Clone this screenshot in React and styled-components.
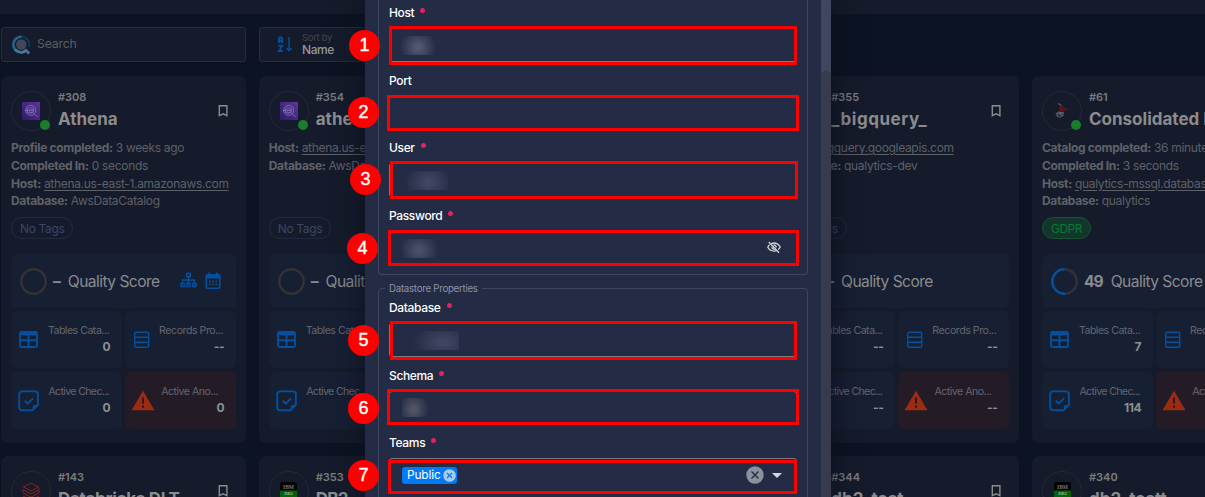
import React from "react";
import styled, { createGlobalStyle } from "styled-components";

const Global = createGlobalStyle`
  * { box-sizing: border-box; }
  html, body { margin: 0; height: 100%; overflow: hidden; background: #0c1322; }
  body { font-family: Inter, "Liberation Sans", sans-serif; }
`;

const Page = styled.main`
  position: relative;
  width: 1205px;
  height: 497px;
  overflow: hidden;
  background: #0c1322;
`;
const TopBar = styled.header`
  height: 14px;
  background: #151b2a;
`;
const Toolbar = styled.div`
  display: flex;
  gap: 13px;
  padding: 13px 0 0 1px;
`;
const ControlBox = styled.div`
  display: flex;
  align-items: center;
  width: 245px;
  height: 35px;
  padding: 0 10px 0 ${(p) => p.$pad}px;
  gap: ${(p) => p.$gap}px;
  background: #151b2a;
  border: 1px solid #262d3b;
  border-radius: 3px;
  color: #5c5e64;
  font-size: 12.3px;
  letter-spacing: -0.2px;
  line-height: 1;
`;
const SortText = styled.div`
  font-size: 9.4px;
  line-height: 11px;
  letter-spacing: -0.25px;
  color: #43464e;
  strong {
    display: block;
    font-weight: 500;
    font-size: 12px;
    line-height: 14px;
    letter-spacing: -0.4px;
    color: #96979a;
  }
`;
const Grid = styled.div`
  display: grid;
  grid-template-columns: repeat(5, 245px);
  grid-auto-rows: 367px;
  gap: 13px 12.75px;
  padding: 14px 0 0 1px;
`;
const Card = styled.article`
  background: #151b2a;
  border-radius: 7px;
  padding: 15px 10px 0;
  overflow: hidden;
`;
const CardHead = styled.div`
  display: flex;
  height: 40px;
  margin-bottom: 8px;
`;
const Avatar = styled.div`
  position: relative;
  display: flex;
  align-items: center;
  justify-content: center;
  flex: none;
  width: 40px;
  height: 40px;
  border: 1px solid #232936;
  border-radius: 50%;
`;
const StatusDot = styled.i`
  position: absolute;
  right: 0;
  bottom: 0;
  width: 10px;
  height: 10px;
  border-radius: 50%;
  background: #1a7d2b;
`;
const Titles = styled.div`
  flex: 1;
  min-width: 0;
  padding-left: 7px;
  white-space: nowrap;
`;
const CardId = styled.div`
  margin-top: -1px;
  font-size: 11px;
  line-height: 15px;
  font-weight: 600;
  color: #7b7c80;
`;
const CardName = styled.div`
  margin-top: 3px;
  font-size: 17px;
  line-height: 22px;
  font-weight: 700;
  letter-spacing: ${(p) => p.$ls || 0}px;
  color: #8c8c8e;
`;
const HeadAction = styled.div`
  width: 10px;
  margin: 14px 8px 0 0;
  line-height: 0;
`;
const Info = styled.div`
  height: 71px;
  font-size: 12px;
  line-height: 17.75px;
  letter-spacing: -0.32px;
  white-space: nowrap;
  color: #5d6068;
  b { font-weight: 700; color: #606269; }
  u { text-underline-offset: 2px; }
`;
const Tag = styled.span`
  display: inline-flex;
  align-items: center;
  height: 22px;
  margin-top: 7px;
  padding: 0 8px;
  border: 1px solid ${(p) => (p.$green ? "#135530" : "#232a3d")};
  border-radius: 11px;
  background: ${(p) => (p.$green ? "#12352c" : "transparent")};
  color: ${(p) => (p.$green ? "#087a34" : "#3c4565")};
  font-size: 12px;
  letter-spacing: ${(p) => (p.$green ? -0.5 : -0.35)}px;
  vertical-align: top;
`;
const Quality = styled.div`
  display: flex;
  align-items: center;
  height: 54px;
  margin-top: 15px;
  padding: 0 15px 0 9px;
  border-radius: 6px;
  background: #171f33;
  color: #8a8b8e;
  font-size: 15.6px;
  letter-spacing: -0.55px;
  white-space: nowrap;
  b { margin: 0 8px 0 6px; font-weight: 700; letter-spacing: -1px; }
`;
const QualityIcons = styled.span`
  display: flex;
  gap: 8px;
  margin-left: auto;
`;
const Tiles = styled.div`
  display: grid;
  grid-template-columns: 111px 111px;
  grid-auto-rows: 57px;
  gap: 4px 3px;
  margin-top: 3px;
`;
const Tile = styled.div`
  display: flex;
  align-items: center;
  justify-content: space-between;
  padding: 0 12px 0 ${(p) => (p.$alert ? 6 : 7)}px;
  border-radius: 6px;
  background: ${(p) => (p.$alert ? "#231c26" : "#171f33")};
`;
const TileText = styled.div`
  margin-top: -2px;
  font-size: 10.6px;
  line-height: 16px;
  letter-spacing: -0.5px;
  text-align: right;
  white-space: nowrap;
  color: #64666e;
  span {
    display: block;
    padding-right: ${(p) => (p.$alert ? 6 : 1)}px;
    letter-spacing: ${(p) => p.$ls || -0.5}px;
  }
  strong { display: block; font-size: 12px; font-weight: 700; color: #8e8f91; }
`;

const Panel = styled.section`
  position: absolute;
  left: 365px;
  top: 0;
  width: 466px;
  height: 497px;
  display: flex;
  background: #232b45;
  box-shadow: 0 0 26px rgba(9, 14, 28, 0.85);
`;
const PanelBody = styled.div`
  flex: 1;
  padding: 0 13px;
`;
const ScrollTrack = styled.div`
  width: 10px;
  padding-top: 71px;
  background: #40465f;
`;
const ScrollThumb = styled.div`
  height: 426px;
  border-radius: 5px 5px 0 0;
  background: #373b4e;
`;
const Group = styled.div`
  border: 1px solid #3d4560;
  border-top-width: ${(p) => (p.$first ? 0 : 1)}px;
  border-radius: ${(p) => (p.$first ? "0 0 4px 4px" : "4px")};
  height: ${(p) => (p.$first ? 275 : 240)}px;
  margin-bottom: 13px;
  padding: ${(p) => (p.$first ? "3px" : "0")} 10px 0;
`;
const Legend = styled.div`
  width: max-content;
  height: 10px;
  margin: -6px 0 5px -4px;
  padding: 0 4px;
  background: #232b45;
  color: #8f94a3;
  font-size: 9.7px;
  line-height: 12px;
  letter-spacing: -0.27px;
`;
const Field = styled.div`
  position: relative;
  height: 67.7px;
`;
const Label = styled.label`
  display: flex;
  height: 20px;
  gap: 6px;
  color: #fff;
  font-size: 12px;
  font-weight: 500;
  line-height: 20px;
  letter-spacing: -0.35px;
`;
const Required = styled.i`
  width: 5px;
  height: 5px;
  margin-top: 5px;
  border-radius: 50%;
  background: #e91e63;
`;
const Input = styled.div`
  display: flex;
  align-items: center;
  height: 34px;
  margin-top: 5px;
  padding: 0 14px 0 12px;
  border: 1px solid #777b83;
  border-radius: 3px;
`;
const Redacted = styled.span`
  width: ${(p) => p.$w}px;
  height: 19px;
  margin-left: ${(p) => p.$ml || 0}px;
  background: radial-gradient(ellipse 60% 110% at ${(p) => p.$cx || 50}% 60%, ${(p) => p.$c || "#50576f"} 0, ${(p) => p.$c || "#50576f"} 12%, rgba(35, 43, 69, 0) 90%);
`;
const Marker = styled.div`
  position: absolute;
  left: ${(p) => p.$x}px;
  top: ${(p) => p.$y}px;
  width: ${(p) => p.$w}px;
  height: ${(p) => p.$h}px;
  border: 3px solid #f00;
`;
const Badge = styled.div`
  position: absolute;
  left: ${(p) => p.$x}px;
  top: ${(p) => p.$y}px;
  width: 31px;
  height: 31px;
  border-radius: 50%;
  background: #f00;
  color: #fff;
  font: 400 18px/31px "Liberation Sans", Arial, sans-serif;
  -webkit-text-stroke: 0.4px #fff;
  text-align: center;
`;
const Chip = styled.span`
  display: flex;
  align-items: center;
  justify-content: space-between;
  width: 55px;
  height: 17px;
  padding: 0 1px 0 5px;
  border-radius: 3px;
  background: #007bf5;
  color: #fff;
  font-size: 11.8px;
  letter-spacing: -0.1px;
`;
const Spacer = styled.span`
  flex: 1;
`;
const Caret = styled.i`
  margin: 1px 0 0 8px;
  border: 5px solid transparent;
  border-top-color: #d6d8dd;
  border-bottom-width: 0;
`;

const BLUE = "#03509f";

const QLogo = () => (
  <svg width="19" height="20" viewBox="0 0 19 20" fill="none">
    <circle cx="9.3" cy="9.5" r="5.2" fill="#43485a" />
    <path d="M9.5 1.8A7.8 7.8 0 0 1 16.8 12" stroke="#0d3555" strokeWidth="2.6" />
    <path d="M9.5 1.8A7.8 7.8 0 1 0 14 15.7" stroke="#296089" strokeWidth="2.6" />
    <path d="M3 14.2C6 18 11 18 14 15.3L17.2 18.5" stroke="#4c7598" strokeWidth="2.6" />
  </svg>
);
const SortIcon = () => (
  <svg width="16" height="17" viewBox="0 0 16 17" fill="none" stroke={BLUE} strokeWidth="1.8">
    <path d="M1.9 7V2.4L2.5 1.5H4.5L5.1 2.4V7M1.9 4.6H5.1M1.2 9.9H5.2L1.9 15H5.8" />
    <path d="M12 1V14M9.4 12L12 14.8L14.6 12" strokeWidth="1.4" />
  </svg>
);
const Bookmark = () => (
  <svg width="10" height="12" viewBox="0 0 10 12" fill="none">
    <path d="M1.3 .8H8.9V10.6L5.1 8.8L1.3 10.6Z" stroke="#8b8b8d" strokeWidth="1.4" />
  </svg>
);
const AthenaIcon = () => (
  <svg width="18" height="18" viewBox="0 0 18 18" fill="none" stroke="#8c7bb0">
    <defs>
      <linearGradient id="athena" x1="0" y1="1" x2="1" y2="0">
        <stop stopColor="#2e1a6b" />
        <stop offset="1" stopColor="#5b369a" />
      </linearGradient>
    </defs>
    <rect width="18" height="18" fill="url(#athena)" stroke="none" />
    <circle cx="8.7" cy="8.3" r="5" strokeWidth=".8" />
    <ellipse cx="8.5" cy="7" rx="3" ry="1.3" strokeWidth=".7" />
    <path d="M2.8 8.5H6M5.5 7V10.5Q8.5 12 11.5 10.2V7M12 11.5L15.5 15" strokeWidth=".8" />
    <circle cx="8.7" cy="9.2" r="1.5" strokeWidth=".7" />
  </svg>
);
const SqlServerIcon = () => (
  <svg width="18" height="18" viewBox="0 0 18 18" fill="none">
    <path d="M5.8 4L8.5 4L11 5.6L16.5 7.3L11.5 8.4L9.6 10.6L4.8 9.9L6.5 7Z" fill="#5c1418" />
    <path d="M5 1.8Q8 1.8 8.5 4" stroke="#666b72" />
    <path d="M2.5 11.8L5 9.8L11 10.3L10.5 13.5Q8.5 17 4 14.8Z" fill="#5c626a" />
    <path d="M3 12L9.5 14.8M5.5 10.5L7 16M10.5 12L4.5 14.5" stroke="#1c2230" strokeWidth=".7" />
  </svg>
);
const DatabricksIcon = () => (
  <svg width="18" height="20" viewBox="0 0 18 20" fill="none" stroke="#88251f" strokeWidth="1">
    <path d="M1.5 6L9 2L16.5 6L9 10ZM1 8.8L9 13L17 8.8V6.5M1 12L9 16.2L17 12V9.5M1 8.8V11M1 15L9 19.2L17 15" />
  </svg>
);
const Db2Icon = () => (
  <svg width="17" height="18" viewBox="0 0 17 18">
    <rect width="17" height="18" rx="3" fill="#000" />
    <path d="M0 8.5H17V15Q17 18 14 18H3Q0 18 0 15Z" fill="#04620b" />
    <text x="8.5" y="6.9" textAnchor="middle" fontFamily="Liberation Serif, serif" fontWeight="700" fontSize="5.5" fill="#77797a">IBM</text>
    <text x="8.5" y="13.4" textAnchor="middle" fontFamily="Liberation Serif, serif" fontWeight="700" fontSize="4.6" fill="#96b498">DB2</text>
  </svg>
);
const ScoreRing = ({ value }) => (
  <svg width="27" height="27" viewBox="0 0 27 27" fill="none">
    <circle cx="13.5" cy="13.5" r="12.2" stroke="#333334" strokeWidth="2.4" />
    {value ? (
      <circle cx="13.5" cy="13.5" r="12.2" stroke={BLUE} strokeWidth="2.4" pathLength="100"
        strokeDasharray={`${value} 100`} transform="translate(27 0) scale(-1 1) rotate(-90 13.5 13.5)" />
    ) : null}
  </svg>
);
const TreeIcon = () => (
  <svg width="17" height="16" viewBox="0 0 17 16" fill="none" stroke={BLUE} strokeWidth="1.5">
    <path d="M6.7 1.4H10.3V4.6H6.7ZM1 11.4H4.2V14.4H1ZM6.9 11.4H10.1V14.4H6.9ZM12.8 11.4H16V14.4H12.8ZM8.5 4.6V11.4M2.6 11.4V8H14.4V11.4" />
  </svg>
);
const CalendarIcon = () => (
  <svg width="16" height="18" viewBox="0 0 16 18" fill="none">
    <path d="M2.5 2.8H13.5Q14.8 2.8 14.8 4V15Q14.8 16.2 13.5 16.2H2.5Q1.2 16.2 1.2 15V4Q1.2 2.8 2.5 2.8Z" stroke={BLUE} strokeWidth="1.6" />
    <path d="M1 3H15V6.6H1ZM3.3 .5H5V3H3.3ZM11 .5H12.7V3H11Z" fill={BLUE} />
    <path d="M4 9.3H12.5M4 12.4H12.5" stroke={BLUE} strokeWidth="1.7" strokeDasharray="1.8 1.4" />
  </svg>
);
const TableIcon = () => (
  <svg width="21" height="19" viewBox="0 0 21 19" fill="none" stroke={BLUE} strokeWidth="1.9">
    <rect x="2" y="2" width="17" height="15" rx="1.5" />
    <path d="M2 3.7H19" strokeWidth="3" />
    <path d="M2 10.3H19M10.5 4V17" />
  </svg>
);
const RecordsIcon = () => (
  <svg width="19" height="19" viewBox="0 0 19 19" fill="none" stroke={BLUE} strokeWidth="1.4">
    <rect x="2.7" y="2.2" width="14" height="15" rx="1.3" />
    <path d="M3 7.2H16.5M3 12.2H16.5" />
  </svg>
);
const CheckIcon = () => (
  <svg width="22" height="22" viewBox="0 0 22 22" fill="none" stroke={BLUE} strokeWidth="1.9">
    <path d="M14.5 20.2H4Q1.2 20.2 1.2 17.4V4.2Q1.2 1.4 4 1.4H17Q19.9 1.4 19.9 4.2V14.8Z" />
    <path d="M14.8 20.2V16.8Q14.8 15 16.6 15H20Z" fill={BLUE} stroke="none" />
    <path d="M6.7 10.8L9.7 13.6L15 8.3" />
  </svg>
);
const AlertIcon = () => (
  <svg width="24" height="21" viewBox="0 0 24 21">
    <path d="M12 .7L23.5 20.3H.5Z" fill="#9b2c12" />
    <path d="M11 7.5H13V13.5H11ZM11 15.5H13V17.7H11Z" fill="#231c26" />
  </svg>
);
const EyeOff = () => (
  <svg width="14" height="13" viewBox="0 0 14 13" fill="none" stroke="#d3d6dc" strokeWidth="1.3">
    <path d="M4.2 2.8Q7 1.3 9.8 2.6Q12 3.6 13.2 6Q12.5 7.6 11.2 8.6M9.5 9.7Q6.8 10.6 4.2 9.5Q1.9 8.5.8 6.2Q1.4 4.8 2.6 3.8" />
    <path d="M1.8 1L12 11.8" />
    <path d="M6.6 4Q9.3 4 9 6.6M7.7 8.4Q5 8.6 4.9 5.8" />
  </svg>
);
const EyeSlot = styled.span`
  margin: -1px 1px 0 0;
  line-height: 0;
`;
const ClearIcon = ({ size, bg, fg, sw }) => (
  <svg width={size} height={size} viewBox="0 0 18 18">
    <circle cx="9" cy="9" r="8.7" fill={bg} />
    <path d="M5.5 5.5L12.5 12.5M12.5 5.5L5.5 12.5" stroke={fg} strokeWidth={sw} />
  </svg>
);

const ICONS = { athena: AthenaIcon, sql: SqlServerIcon, dbx: DatabricksIcon, db2: Db2Icon };

const CARDS = [
  { id: "#308", name: "Athena", icon: "athena", mark: true, tools: true, score: "–", stats: ["0", "--", "0", "0"],
    info: [["Profile completed:", "3 weeks ago"], ["Completed In:", "0 seconds"], ["Host:", "athena.us-east-1.amazonaws.com", 1], ["Database:", "AwsDataCatalog"]] },
  { id: "#354", name: "athena", icon: "athena", score: "–", stats: ["", "", "", ""],
    info: [["Host:", "athena.us-east-1", 1], ["Database:", "AwsDataCatalog"]] },
  null,
  { id: "#355", name: "_bigquery_", ls: 0.55, mark: true, score: "–", stats: ["--", "--", "--", "--"],
    info: [["Host:", "bigquery.googleapis.com", 1], ["Database:", "qualytics-dev"]] },
  { id: "#61", name: "Consolidated B", icon: "sql", score: "49", tag: "GDPR", stats: ["7", "", "114", ""],
    info: [["Catalog completed:", "36 minutes ago"], ["Completed In:", "3 seconds"], ["Host:", "qualytics-mssql.database", 1], ["Database:", "qualytics"]] },
  { id: "#143", name: "Databricks DLT", ls: -0.3, icon: "dbx", mark: true },
  { id: "#353", name: "DB2", ls: -0.8, icon: "db2" },
  null,
  { id: "#344", name: "db2_test", mark: true },
  { id: "#340", name: "db2_testt", icon: "db2" },
];

function StatTile({ icon: Icon, label, value, alert, ls }) {
  return (
    <Tile $alert={alert}>
      <Icon />
      <TileText $alert={alert} $ls={ls}>
        <span>{label}</span>
        <strong>{value || "\u00a0"}</strong>
      </TileText>
    </Tile>
  );
}

function DatastoreCard({ data }) {
  if (!data) return <Card />;
  const Icon = ICONS[data.icon];
  return (
    <Card>
      <CardHead>
        <Avatar>
          {Icon && <Icon />}
          {data.info && <StatusDot />}
        </Avatar>
        <Titles>
          <CardId>{data.id}</CardId>
          <CardName $ls={data.ls}>{data.name}</CardName>
        </Titles>
        {data.mark && <HeadAction><Bookmark /></HeadAction>}
      </CardHead>
      {data.info && (
        <>
          <Info>
            {data.info.map(([k, v, link]) => (
              <div key={k}><b>{k}</b> {link ? <u>{v}</u> : v}</div>
            ))}
          </Info>
          <Tag $green={!!data.tag}>{data.tag || "No Tags"}</Tag>
          <Quality>
            <ScoreRing value={data.tag ? 51 : 0} />
            <b>{data.score}</b>Quality Score
            {data.tools && <QualityIcons><TreeIcon /><CalendarIcon /></QualityIcons>}
          </Quality>
          <Tiles>
            <StatTile icon={TableIcon} label="Tables Cata..." value={data.stats[0]} />
            <StatTile icon={RecordsIcon} label="Records Pro..." value={data.stats[1]} ls={-0.45} />
            <StatTile icon={CheckIcon} label="Active Chec..." value={data.stats[2]} ls={-0.65} />
            <StatTile icon={AlertIcon} label="Active Ano..." value={data.stats[3]} alert />
          </Tiles>
        </>
      )}
    </Card>
  );
}

/* Marker and badge offsets are relative to the field they annotate. */
function FormField({ label, required = true, n, marker: [x, y, w, h], badge: [bx, by], children }) {
  return (
    <Field>
      <Label>{label}{required && <Required />}</Label>
      <Input>{children}</Input>
      <Marker $x={x} $y={y} $w={w} $h={h} />
      <Badge $x={bx} $y={by}>{n}</Badge>
    </Field>
  );
}

export default function App() {
  return (
    <Page>
      <Global />
      <TopBar />
      <Toolbar>
        <ControlBox $gap={6} $pad={10}><QLogo />Search</ControlBox>
        <ControlBox $gap={9} $pad={17}>
          <SortIcon />
          <SortText>Sort by<strong>Name</strong></SortText>
        </ControlBox>
      </Toolbar>
      <Grid>
        {CARDS.map((c, i) => <DatastoreCard key={i} data={c} />)}
      </Grid>
      <Panel>
        <PanelBody>
          <Group $first>
            <FormField label="Host" n="1" marker={[0, 23, 408, 39]} badge={[-40, 26.5]}>
              <Redacted $w={34} $ml={-1} />
            </FormField>
            <FormField label="Port" required={false} n="2" marker={[-2, 24.3, 412, 36]} badge={[-41, 26]}>
              {null}
            </FormField>
            <FormField label="User" n="3" marker={[1, 22.6, 408, 38]} badge={[-39, 26]}>
              <Redacted $w={44} $ml={2} $cx={56} $c="#404762" />
            </FormField>
            <FormField label="Password" n="4" marker={[-1, 23.9, 411, 36]} badge={[-42, 26.5]}>
              <Redacted $w={36} $ml={-1} $c="#484f68" />
              <Spacer />
              <EyeSlot><EyeOff /></EyeSlot>
            </FormField>
          </Group>
          <Group>
            <Legend>Datastore Properties</Legend>
            <FormField label="Database" n="5" marker={[1, 23, 407, 39]} badge={[-41, 26.5]}>
              <Redacted $w={57} $ml={0} $cx={72} $c="#3e4560" />
            </FormField>
            <FormField label="Schema" n="6" marker={[-2, 23.3, 412, 36]} badge={[-41, 27]}>
              <Redacted $w={28} $ml={0} $cx={42} $c="#505464" />
            </FormField>
            <FormField label="Teams" n="7" marker={[-1, 26.2, 409, 34]} badge={[-41, 26.6]}>
              <Chip>Public<ClearIcon size={13} bg="#a3cdf8" fg="#1a72d2" sw={1.6} /></Chip>
              <Spacer />
              <ClearIcon size={18} bg="#8c91a0" fg="#232b45" sw={1.4} />
              <Caret />
            </FormField>
          </Group>
        </PanelBody>
        <ScrollTrack><ScrollThumb /></ScrollTrack>
      </Panel>
    </Page>
  );
}
